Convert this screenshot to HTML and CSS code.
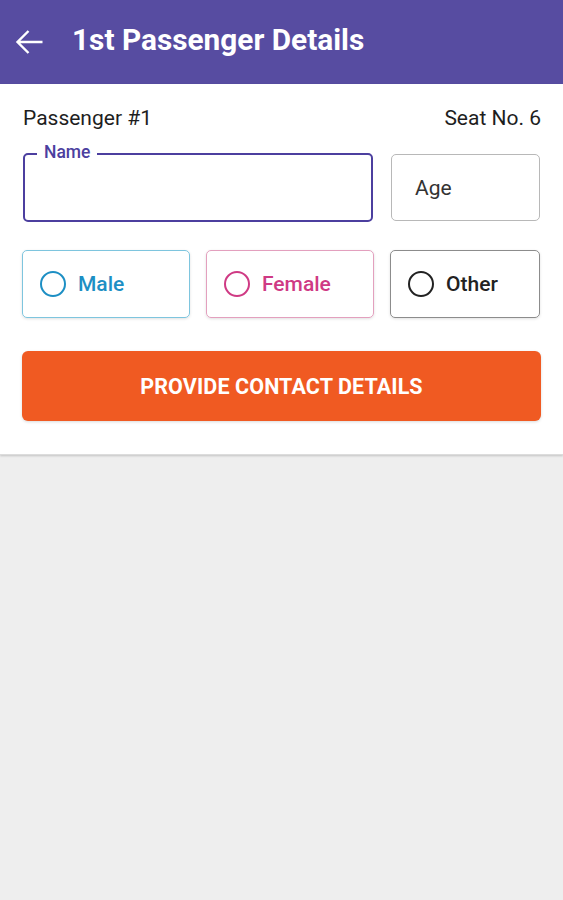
FILE: index.html
```html
<!DOCTYPE html>
<html>
<head>
<meta charset="utf-8">
<link rel="stylesheet" href="styles.css">
</head>
<body>
<header class="appbar">
  <svg class="back" width="28" height="28" viewBox="0 0 28 28"><path d="M27.5 14H2.5M13.5 3L2.5 14l11 11" fill="none" stroke="#fff" stroke-width="2.4"/></svg>
  <h1 class="title">1st Passenger Details</h1>
</header>
<main class="panel">
  <div class="meta">
    <span>Passenger #1</span>
    <span>Seat No. 6</span>
  </div>
  <div class="fields">
    <div class="field name">
      <span class="label">Name</span>
    </div>
    <div class="field age"><span class="placeholder">Age</span></div>
  </div>
  <div class="genders">
    <div class="gender male"><span class="radio"></span><span>Male</span></div>
    <div class="gender female"><span class="radio"></span><span>Female</span></div>
    <div class="gender other"><span class="radio"></span><span>Other</span></div>
  </div>
  <button class="cta">PROVIDE CONTACT DETAILS</button>
</main>
</body>
</html>
```
FILE: styles.css
```css
html, body { margin: 0; padding: 0; }
body {
  background: #eeeeee;
  font-family: Roboto, "Liberation Sans", sans-serif;
  width: 563px;
  height: 900px;
}
.appbar {
  height: 84px;
  background: #574ca1;
  display: flex;
  align-items: center;
  padding-left: 15px;
  box-sizing: border-box;
}
.back { margin-right: 29px; }
.title {
  margin: 0 0 6px 0;
  color: #fff;
  font-size: 29.8px;
  font-weight: 700;
}
.panel {
  background: #fff;
  padding: 23px 22px 33px 22px;
  box-shadow: 0 1px 2px rgba(0,0,0,0.18);
  border-bottom: 1px solid #dcdcdc;
}
.meta {
  display: flex;
  justify-content: space-between;
  font-size: 21px;
  line-height: 22px;
  color: #1e1e1e;
  padding: 0 0 0 1px;
}
.fields {
  margin-top: 24px;
  display: grid;
  grid-template-columns: 351px 150px;
  gap: 18px;
  height: 69px;
}
.field {
  position: relative;
  box-sizing: border-box;
  border-radius: 5px;
  display: flex;
  align-items: center;
}
.field.name {
  border: 2px solid #4c3f9f;
  margin-left: 1px;
}
.field.name .label {
  position: absolute;
  top: -13px;
  left: 12px;
  background: #fff;
  padding: 0 7px;
  font-size: 17.5px;
  font-weight: 500;
  color: #4c3f9f;
  line-height: 20px;
}
.field.age {
  border: 1px solid #b8b8b8;
  margin: 1px 1px 1px 0;
  padding-left: 23px;
}
.placeholder { font-size: 21px; color: #333; }
.genders {
  margin-top: 28px;
  display: grid;
  grid-template-columns: 168px 168px 150px;
  gap: 16px;
  height: 68px;
}
.gender {
  box-sizing: border-box;
  border-radius: 5px;
  border: 1px solid;
  display: flex;
  align-items: center;
  padding-left: 17px;
  font-size: 21px;
  font-weight: 500;
  gap: 12px;
  box-shadow: 0 1px 3px rgba(0,0,0,0.12);
}
.radio {
  width: 22px;
  height: 22px;
  border: 2px solid currentColor;
  border-radius: 50%;
}
.male { color: #1d8fc4; border-color: #7ec5de; }
.female { color: #cf3a84; border-color: #e3a0be; }
.other { color: #222; border-color: #8c8c8c; }
.cta {
  margin-top: 33px;
  width: 519px;
  height: 70px;
  border: none;
  border-radius: 6px;
  background: #f05a22;
  color: #fff;
  font-family: Roboto, "Liberation Sans", sans-serif;
  font-size: 21.5px;
  font-weight: 700;
  letter-spacing: 0.1px;
  box-shadow: 0 1px 3px rgba(0,0,0,0.15);
  display: block;
}
```
